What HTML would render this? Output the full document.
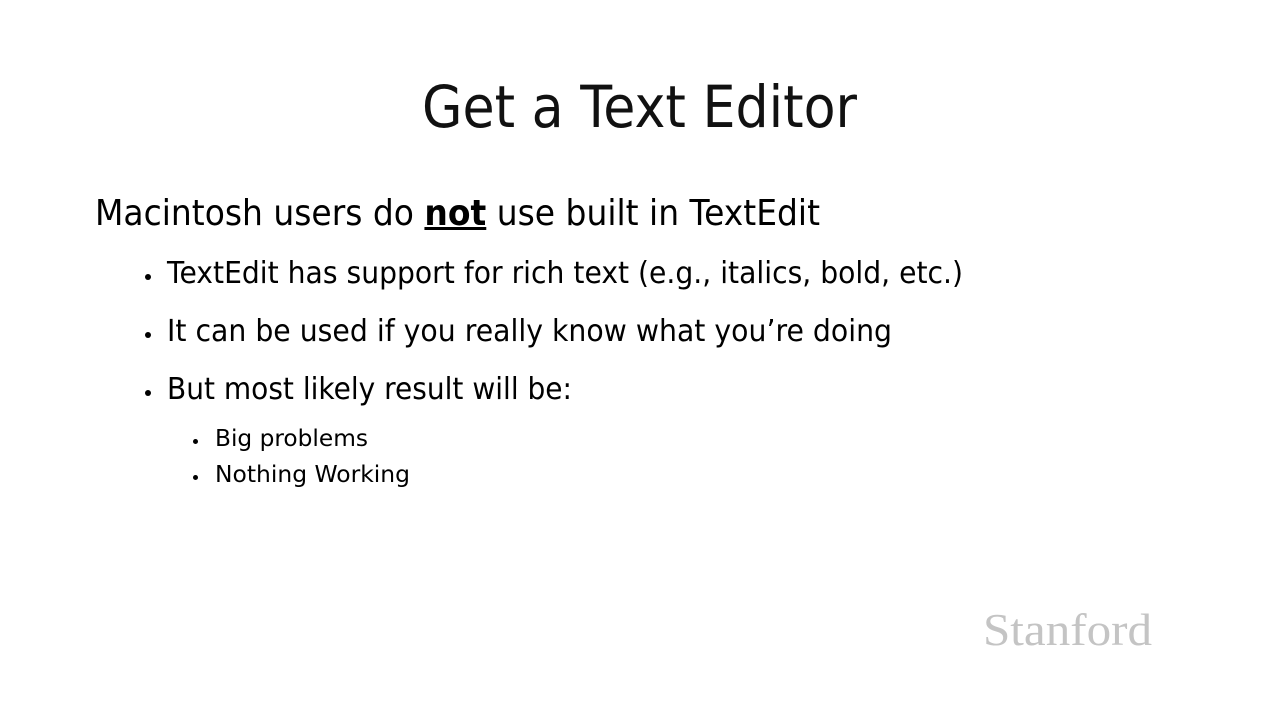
<!DOCTYPE html>
<html><head><meta charset="utf-8"><style>
html,body{margin:0;padding:0;background:#fff;width:1280px;height:720px;overflow:hidden}
body{position:relative;font-family:"DejaVu Sans","Liberation Sans",sans-serif;color:#000}
.l{position:absolute;white-space:nowrap;transform-origin:0 0;line-height:1}
.bl{position:absolute;width:6px;height:6px;border-radius:50%;background:#000}
.st{font-family:"Liberation Serif",serif;color:#c4c4c4}
</style></head><body>
<div class="l" id="t" style="left:422px;top:78px;font-size:58px;color:#111">Get a Text Editor</div>
<div class="l" id="a" style="left:95px;top:196px;font-size:36px">Macintosh users do <b><u>not</u></b> use built in TextEdit</div>
<div class="bl" style="left:145px;top:274px"></div>
<div class="l" id="b" style="left:167px;top:259px;font-size:30px">TextEdit has support for rich text (e.g., italics, bold, etc.)</div>
<div class="bl" style="left:145px;top:332px"></div>
<div class="l" id="c" style="left:167px;top:317px;font-size:30px">It can be used if you really know what you’re doing</div>
<div class="bl" style="left:145px;top:390px"></div>
<div class="l" id="d" style="left:167px;top:375px;font-size:30px">But most likely result will be:</div>
<div class="bl" style="left:193px;top:439px;width:5px;height:5px"></div>
<div class="l" id="e" style="left:215px;top:428px;font-size:23px">Big problems</div>
<div class="bl" style="left:193px;top:475px;width:5px;height:5px"></div>
<div class="l" id="f" style="left:215px;top:464px;font-size:23px">Nothing Working</div>
<div class="l st" id="s" style="left:983px;top:607px;font-size:46px">Stanford</div>
<script>
var W={t:435,a:725,b:796,c:725,d:405,e:153,f:195,s:169};
for(var k in W){var e=document.getElementById(k);var w=e.getBoundingClientRect().width;e.style.transform="scaleX("+(W[k]/w)+")";}
</script>
</body></html>
